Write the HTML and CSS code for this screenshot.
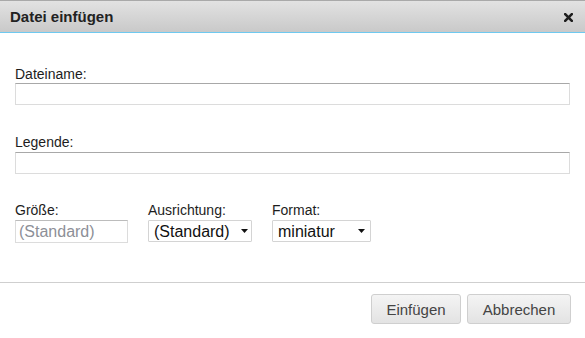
FILE: index.html
```html
<!DOCTYPE html>
<html lang="de">
<head>
<meta charset="utf-8">
<title>Datei einfügen</title>
<link rel="stylesheet" href="styles.css">
</head>
<body>
<div class="dialog">
  <div class="titlebar">
    <span class="title">Datei einfügen</span>
    <button class="close" type="button" aria-label="Schließen">
      <svg width="9" height="9" viewBox="0 0 9 9"><path d="M1.2 1.2 L7.8 7.8 M7.8 1.2 L1.2 7.8" stroke="#1e1e1e" stroke-width="2.6" stroke-linecap="square"/></svg>
    </button>
  </div>
  <div class="content">
    <div class="field">
      <label class="label">Dateiname:</label>
      <input class="text wide" type="text">
    </div>
    <div class="field second">
      <label class="label">Legende:</label>
      <input class="text wide" type="text">
    </div>
    <div class="row">
      <div class="field">
        <label class="label">Größe:</label>
        <input class="text size" type="text" placeholder="(Standard)">
      </div>
      <div class="field">
        <label class="label">Ausrichtung:</label>
        <select class="select align"><option>(Standard)</option></select>
      </div>
      <div class="field">
        <label class="label">Format:</label>
        <select class="select format"><option>miniatur</option></select>
      </div>
    </div>
  </div>
  <div class="buttonpane">
    <button class="btn insert" type="button">Einfügen</button>
    <button class="btn cancel" type="button">Abbrechen</button>
  </div>
</div>
</body>
</html>
```
FILE: styles.css
```css
html, body {
  margin: 0;
  padding: 0;
  background: #fff;
}
body {
  font-family: "Liberation Sans", Arial, sans-serif;
  color: #222;
}
.dialog {
  width: 585px;
  height: 338px;
  background: #fff;
}
.titlebar {
  display: flex;
  align-items: center;
  justify-content: space-between;
  padding: 1px 12px 0 10px;
  box-sizing: border-box;
  height: 33px;
  border-top: 1px solid #a9a9a9;
  border-bottom: 1px solid #6ec9f0;
  background: linear-gradient(#e2e2e2, #c9c9c9);
}
.title {
  font-size: 15px;
  font-weight: bold;
  line-height: 30px;
  color: #222;
}
.close {
  border: 0;
  background: none;
  padding: 0;
  width: 9px;
  height: 9px;
  display: flex;
  margin-top: 1px;
}
.content {
  padding: 33px 15px 39px 15px;
}
.field {
  display: flex;
  flex-direction: column;
}
.field.second {
  margin-top: 29px;
}
.label {
  font-size: 14px;
  line-height: 16px;
  margin-bottom: 1px;
  color: #1d1d1d;
}
.second .label {
  margin-bottom: 2px;
}
.text {
  box-sizing: border-box;
  height: 22px;
  border: 1px solid #dcdcdc;
  border-top-color: #a8a8a8;
  padding: 0 3px;
  margin: 0;
  font-family: "Liberation Sans", Arial, sans-serif;
  font-size: 16px;
  outline: none;
}
.wide {
  width: 555px;
}
.row {
  display: flex;
  gap: 20px;
  margin-top: 28px;
}
.row .label {
  margin-bottom: 2px;
}
.size {
  width: 113px;
  height: 23px;
  border-top-color: #bcbcbc;
}
.size::placeholder {
  color: #8d8f97;
}
.select {
  appearance: none;
  -webkit-appearance: none;
  box-sizing: border-box;
  height: 22px;
  margin: 0;
  border: 1px solid #d4d4d4;
  border-radius: 1px;
  padding: 0 0 0 4px;
  font-family: "Liberation Sans", Arial, sans-serif;
  font-size: 16px;
  color: #111;
  background-color: #fff;
  background-image: url("data:image/svg+xml,%3Csvg xmlns='http://www.w3.org/2000/svg' width='7' height='4'%3E%3Cpath d='M0 0 H7 L3.5 4 Z' fill='%23111'/%3E%3C/svg%3E");
  background-repeat: no-repeat;
  background-position: right 3px center;
}
.align {
  width: 104px;
  padding-left: 5px;
}
.format {
  width: 99px;
  padding-left: 5px;
  background-position: right 5px center;
}
.buttonpane {
  display: flex;
  justify-content: flex-end;
  gap: 6px;
  border-top: 1px solid #cfcfcf;
  padding: 11px 14px 0 0;
}
.btn {
  height: 30px;
  box-sizing: border-box;
  border: 1px solid #cfcfcf;
  border-radius: 3px;
  background: linear-gradient(#f4f4f4, #e3e3e3);
  font-family: "Liberation Sans", Arial, sans-serif;
  font-size: 15px;
  color: #444;
  padding: 1px 0 0 0;
}
.insert {
  width: 90px;
}
.cancel {
  width: 104px;
}
```
